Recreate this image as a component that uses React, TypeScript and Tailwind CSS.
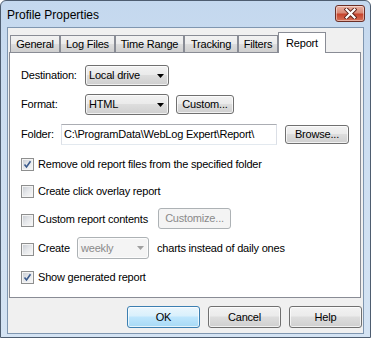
import React from "react";

const btnBg =
  "bg-[linear-gradient(to_bottom,#f2f2f2_0%,#ebebeb_45%,#dddddd_50%,#cfcfcf_100%)]";

function Button({ children, w, h = 21, def = false }: { children: React.ReactNode; w: string; h?: number; def?: boolean }) {
  return (
    <div
      className={
        "flex items-center justify-center rounded-[3px] border text-[11px] leading-[13px] text-black shadow-[inset_0_0_0_1px_rgba(255,255,255,0.7)] " +
        w +
        " " +
        (h === 19 ? "h-[19px] " : h === 22 ? "h-[22px] " : "h-[21px] ") +
        (def
          ? "border-[#3c7fb1] bg-[linear-gradient(to_bottom,#eaf6fd_0%,#d9f0fc_45%,#bee6fd_50%,#a7d9f5_100%)]"
          : "border-[#707070] " + btnBg)
      }
    >
      {children}
    </div>
  );
}

function Arrow({ color = "#000" }: { color?: string }) {
  return (
    <svg width="7" height="4" viewBox="0 0 7 4" className="shrink-0">
      <path d="M0 0H7L3.5 4Z" fill={color} />
    </svg>
  );
}

function Combo({ text, w, disabled = false }: { text: string; w: string; disabled?: boolean }) {
  return (
    <div
      className={
        "flex shrink-0 items-center justify-between rounded-[3px] border pl-[3px] pr-[4px] text-[11px] shadow-[inset_0_0_0_1px_rgba(255,255,255,0.7)] " +
        w +
        (disabled
          ? " h-[22px] border-[#adb2b5] bg-[#f4f4f4] text-[#8a8a8a]"
          : " h-[21px] border-[#707070] text-black " + btnBg)
      }
    >
      <span>{text}</span>
      <Arrow color={disabled ? "#a0a0a0" : "#000"} />
    </div>
  );
}

function Check({ checked = false }: { checked?: boolean }) {
  return (
    <div className="mr-[4px] flex h-[13px] w-[13px] shrink-0 items-center justify-center border border-[#8e8f8f] bg-[#f4f4f4]">
      <div className="relative flex h-[11px] w-[11px] items-center justify-center border border-[#f4f4f4] bg-[linear-gradient(135deg,#cbcfd5_0%,#e6e8eb_50%,#f6f6f6_100%)]">
        {checked && (
          <svg width="9" height="9" viewBox="0 0 9 9" className="absolute left-[0px] top-[0px]">
            <path d="M1.5 4.5L3.5 7L7.5 1.2" fill="none" stroke="#3a5a8c" strokeWidth="1.6" />
          </svg>
        )}
      </div>
    </div>
  );
}

function Tab({ label, w, selected = false }: { label: string; w: string; selected?: boolean }) {
  if (selected) {
    return (
      <div
        className={
          "relative z-10 -mb-px flex h-[21px] items-start justify-center border border-b-0 border-[#898c95] bg-white pt-[2px] text-[11px] text-black " +
          w
        }
      >
        {label}
      </div>
    );
  }
  return (
    <div
      className={
        "mt-[3px] flex h-[17px] items-center justify-center border border-b-0 border-[#898c95] bg-[linear-gradient(to_bottom,#f2f2f2_0%,#ebebeb_50%,#dddddd_51%,#cfcfcf_100%)] text-[11px] text-black " +
        w
      }
    >
      {label}
    </div>
  );
}

export default function App() {
  return (
    <div className="h-[338px] w-[371px] font-['Liberation_Sans',Arial,sans-serif] tracking-[-0.2px]">
      <div className="flex h-[338px] w-[371px] flex-col rounded-t-[6px] border border-[#4e5d70] bg-[linear-gradient(to_bottom,#c4d8ee_0%,#cadcf0_20%,#d4e3f3_100%)]">
        {/* Title bar */}
        <div className="flex h-[26px] shrink-0 items-start justify-between">
          <div className="pl-[6px] pt-[5px] text-[12px] tracking-normal text-black">Profile Properties</div>
          <div className="mr-[5px] mt-[4px] flex h-[17px] w-[30px] items-center justify-center rounded-[3px] border border-[#6b2f27] bg-[linear-gradient(to_bottom,#eab0a1_0%,#d98a77_45%,#c7442d_55%,#d6735a_100%)] shadow-[inset_0_0_0_1px_rgba(255,255,255,0.45)]">
            <svg width="13" height="11" viewBox="0 0 13 11">
              <path d="M2.5 1.5L10.5 9.5M10.5 1.5L2.5 9.5" stroke="#5a2018" strokeWidth="4" strokeLinecap="square" />
              <path d="M2.5 1.5L10.5 9.5M10.5 1.5L2.5 9.5" stroke="#ffffff" strokeWidth="2.2" strokeLinecap="square" />
            </svg>
          </div>
        </div>

        {/* Client */}
        <div className="mx-[6px] mb-[3px] flex flex-1 flex-col border border-[#7f96b0] bg-[#f0f0f0]">
          {/* Tabs */}
          <div className="ml-[2px] mt-[4px] flex h-[20px] items-start">
            <Tab label="General" w="w-[50px]" />
            <Tab label="Log Files" w="w-[55px]" />
            <Tab label="Time Range" w="w-[69px]" />
            <Tab label="Tracking" w="w-[54px]" />
            <Tab label="Filters" w="w-[40px]" />
            <Tab label="Report" w="w-[48px]" selected />
          </div>

          {/* Panel */}
          <div className="ml-[1px] flex h-[246px] w-[352px] flex-col border border-[#898c95] bg-white pl-[11px] text-[11px] leading-[13px] text-black">
            <div className="mt-[12px] flex h-[21px] items-center">
              <span className="w-[64px]">Destination:</span>
              <Combo text="Local drive" w="w-[84px]" />
            </div>
            <div className="mt-[8px] flex h-[21px] items-center">
              <span className="w-[64px]">Format:</span>
              <Combo text="HTML" w="w-[84px]" />
              <div className="ml-[7px]">
                <Button w="w-[58px]" h={19}>Custom...</Button>
              </div>
            </div>
            <div className="mt-[9px] flex h-[21px] items-center">
              <span className="w-[40px]">Folder:</span>
              <div className="flex h-[21px] w-[216px] items-center border border-[#abadb3] border-b-[#e3e9ef] border-l-[#dbdfe6] border-r-[#dbdfe6] bg-white pl-[2px]">
                C:\ProgramData\WebLog Expert\Report\
              </div>
              <div className="ml-[8px]">
                <Button w="w-[64px]" h={19}>Browse...</Button>
              </div>
            </div>
            <div className="mt-[13px] flex h-[13px] items-center">
              <Check checked />
              <span>Remove old report files from the specified folder</span>
            </div>
            <div className="mt-[14px] flex h-[13px] items-center">
              <Check />
              <span>Create click overlay report</span>
            </div>
            <div className="mt-[10px] flex h-[21px] items-center">
              <div className="mt-[3px]">
                <Check />
              </div>
              <span className="mt-[1px] w-[120px]">Custom report contents</span>
              <div className="flex h-[21px] w-[73px] items-center justify-center rounded-[3px] border border-[#adb2b5] bg-[#f4f4f4] text-[#8a8a8a]">
                Customize...
              </div>
            </div>
            <div className="mt-[8px] flex h-[22px] items-center">
              <div className="mt-[2px]">
                <Check />
              </div>
              <span className="mt-[1px] w-[39px]">Create</span>
              <Combo text="weekly" w="w-[72px]" disabled />
              <span className="ml-[8px] mt-[1px]">charts instead of daily ones</span>
            </div>
            <div className="mt-[12px] flex h-[13px] items-center">
              <Check checked />
              <span>Show generated report</span>
            </div>
          </div>

          {/* Buttons */}
          <div className="mr-[1px] mt-[8px] flex justify-end gap-[8px]">
            <Button w="w-[73px]" h={22} def>OK</Button>
            <Button w="w-[73px]" h={22}>Cancel</Button>
            <Button w="w-[73px]" h={22}>Help</Button>
          </div>
        </div>
      </div>
    </div>
  );
}
